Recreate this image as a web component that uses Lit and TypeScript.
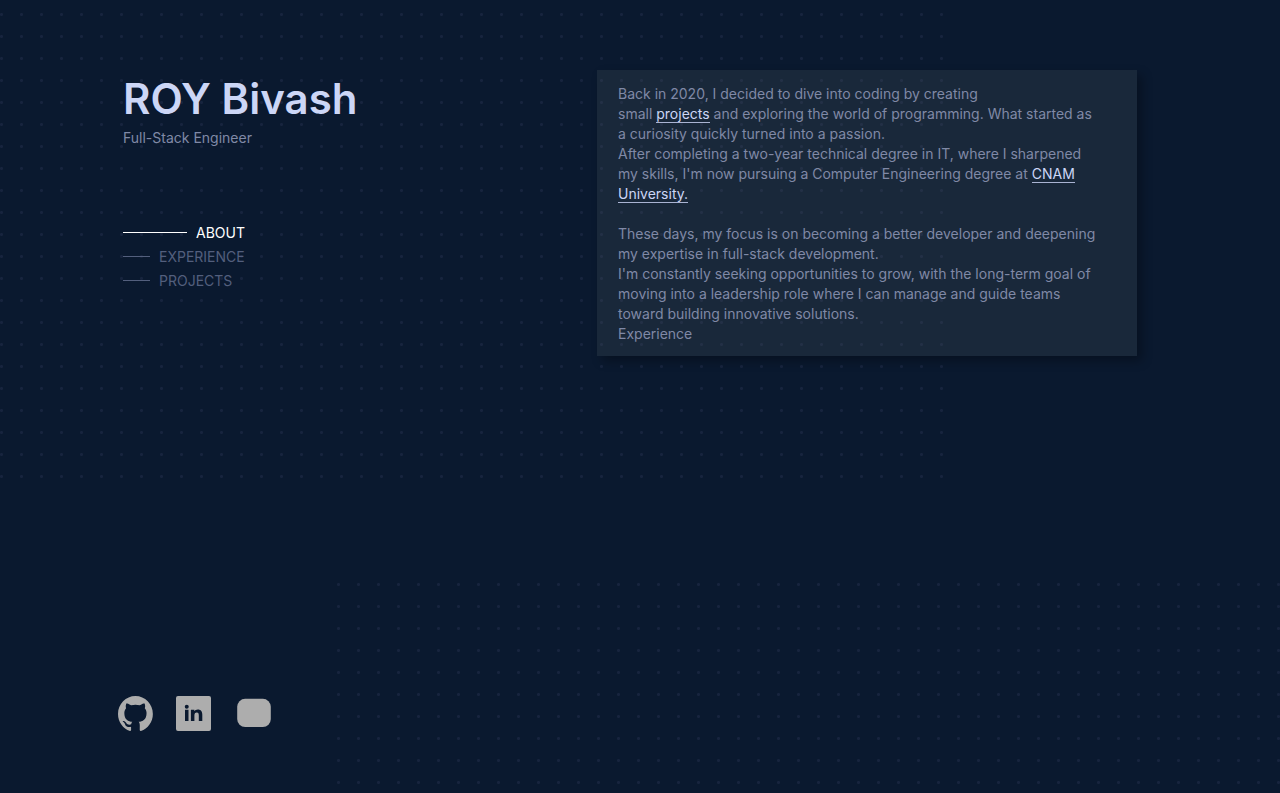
import { LitElement, html, css } from "lit";
import { customElement, state } from "lit/decorators.js";
import { classMap } from "lit/directives/class-map.js";

const SECTIONS = ["About", "Experience", "Projects"];

@customElement("app-root")
export class AppRoot extends LitElement {
  @state() private active = "About";

  static styles = css`
    :host {
      display: block;
      position: relative;
      min-height: 100vh;
      box-sizing: border-box;
      overflow: hidden;
      background: #0a192f;
      color: #8089a6;
      font: 400 14px/20px Inter, sans-serif;
    }
    /* Dotted decoration behind the content */
    .dots {
      position: absolute;
      pointer-events: none;
      background-image: radial-gradient(circle at 1.5px 1.5px, #17243e 1.2px, transparent 1.8px);
      background-size: 20px 22px;
    }
    .dots.start {
      left: 0;
      top: 0;
      width: 75%;
      height: 480px;
      background-position: 0 13px;
    }
    .dots.end {
      right: 0;
      bottom: 0;
      width: 943px;
      height: 210px;
    }
    .layout {
      position: relative;
      display: grid;
      grid-template-columns: minmax(0, 474px) minmax(0, 540px);
      justify-content: center;
      min-height: 100vh;
      box-sizing: border-box;
      padding: 70px 20px 62px 0;
    }
    .intro {
      display: flex;
      flex-direction: column;
    }
    h1 {
      margin: 0;
      padding-top: 4px;
      font-size: 42px;
      line-height: 50px;
      font-weight: 600;
      color: #ccd6f6;
    }
    p {
      margin: 0;
    }
    .role {
      padding-top: 4px;
    }
    nav {
      display: flex;
      flex-direction: column;
      gap: 4px;
      align-items: flex-start;
      margin-top: 75px;
    }
    nav a {
      display: flex;
      align-items: center;
      gap: 9px;
      color: #535f7d;
      text-decoration: none;
      text-transform: uppercase;
    }
    nav a::before {
      content: "";
      width: 27px;
      height: 1px;
      margin-bottom: 2px;
      background: currentColor;
    }
    nav a.active {
      color: #fff;
    }
    nav a.active::before {
      width: 64px;
    }
    .social {
      display: flex;
      gap: 23px;
      margin-top: auto;
      margin-left: -5px;
    }
    .social a {
      display: block;
      height: 35px;
    }
    .social svg {
      display: block;
      fill: #adadad;
    }
    .card {
      align-self: start;
      padding: 14px 40px 12px 21px;
      background: rgba(68, 84, 94, 0.26);
      box-shadow: 5px 5px 10px rgba(0, 0, 0, 0.3);
    }
    .card p + p.gap {
      margin-top: 20px;
    }
    .card a {
      color: #ccd6f6;
      text-decoration: none;
      border-bottom: 1px solid #aab4d3;
    }
  `;

  render() {
    return html`
      <div class="dots start"></div>
      <div class="dots end"></div>
      <div class="layout">
        <header class="intro">
          <h1>ROY Bivash</h1>
          <p class="role">Full-Stack Engineer</p>
          <nav aria-label="Sections">
            ${SECTIONS.map(
              (s) => html`<a
                href="#${s.toLowerCase()}"
                class=${classMap({ active: s === this.active })}
                @click=${() => (this.active = s)}
                >${s}</a
              >`
            )}
          </nav>
          <div class="social">
            <a href="#github" aria-label="GitHub">
              <svg width="35" height="35" viewBox="0 0 98 96" preserveAspectRatio="none">
                <path fill-rule="evenodd" d="M48.854 0C21.839 0 0 22 0 49.217c0 21.756 13.993 40.172 33.405 46.69 2.427.49 3.316-1.059 3.316-2.362 0-1.141-.08-5.052-.08-9.127-13.59 2.934-16.42-5.867-16.42-5.867-2.184-5.704-5.42-7.17-5.42-7.17-4.448-3.015.324-3.015.324-3.015 4.934.326 7.523 5.052 7.523 5.052 4.367 7.496 11.404 5.378 14.235 4.074.404-3.178 1.699-5.378 3.074-6.6-10.839-1.141-22.243-5.378-22.243-24.283 0-5.378 1.94-9.778 5.014-13.2-.485-1.222-2.184-6.275.486-13.038 0 0 4.125-1.304 13.426 5.052a46.97 46.97 0 0 1 12.214-1.63c4.125 0 8.33.571 12.213 1.63 9.302-6.356 13.427-5.052 13.427-5.052 2.67 6.763.97 11.816.485 13.038 3.155 3.422 5.015 7.822 5.015 13.2 0 18.905-11.404 23.06-22.324 24.283 1.78 1.548 3.316 4.481 3.316 9.126 0 6.6-.08 11.897-.08 13.526 0 1.304.89 2.853 3.316 2.364 19.412-6.52 33.405-24.935 33.405-46.691C97.707 22 75.788 0 48.854 0z" />
              </svg>
            </a>
            <a href="#linkedin" aria-label="LinkedIn">
              <svg width="35" height="35" viewBox="0 0 35 35">
                <path fill-rule="evenodd" d="M2 0h31a2 2 0 0 1 2 2v31a2 2 0 0 1-2 2H2a2 2 0 0 1-2-2V2a2 2 0 0 1 2-2zM9 13.700h3.500v11.300H9zM10.750 8.800a2 2 0 1 0 0 4a2 2 0 1 0 0-4zM14.900 13.700h3.400v1.600c.7-1.200 2-1.900 3.500-1.900 3.300 0 4.500 2.200 4.500 5.400V25h-3.500v-5.500c0-1.700-.4-3-2-3-1.700 0-2.400 1.200-2.400 3V25h-3.500z" />
              </svg>
            </a>
            <a href="#video" aria-label="Video channel">
              <svg width="40" height="35" viewBox="0 0 40 35">
                <rect x="3.200" y="2.800" width="33.600" height="28.200" rx="8" />
              </svg>
            </a>
          </div>
        </header>
        <main class="card">
          <p>
            Back in 2020, I decided to dive into coding by creating
            <br />small <a href="#projects">projects</a> and exploring the world of programming. What started
            as a curiosity quickly turned into a passion.
          </p>
          <p>
            After completing a two-year technical degree in IT, where I sharpened my skills, I'm now pursuing a
            Computer Engineering degree at <a href="#cnam">CNAM University.</a>
          </p>
          <p class="gap">
            These days, my focus is on becoming a better developer and deepening my expertise in full-stack
            development.
          </p>
          <p>
            I'm constantly seeking opportunities to grow, with the long-term goal of moving into a leadership
            role where I can manage and guide teams toward building innovative solutions.
          </p>
          <p>Experience</p>
        </main>
      </div>
    `;
  }
}
